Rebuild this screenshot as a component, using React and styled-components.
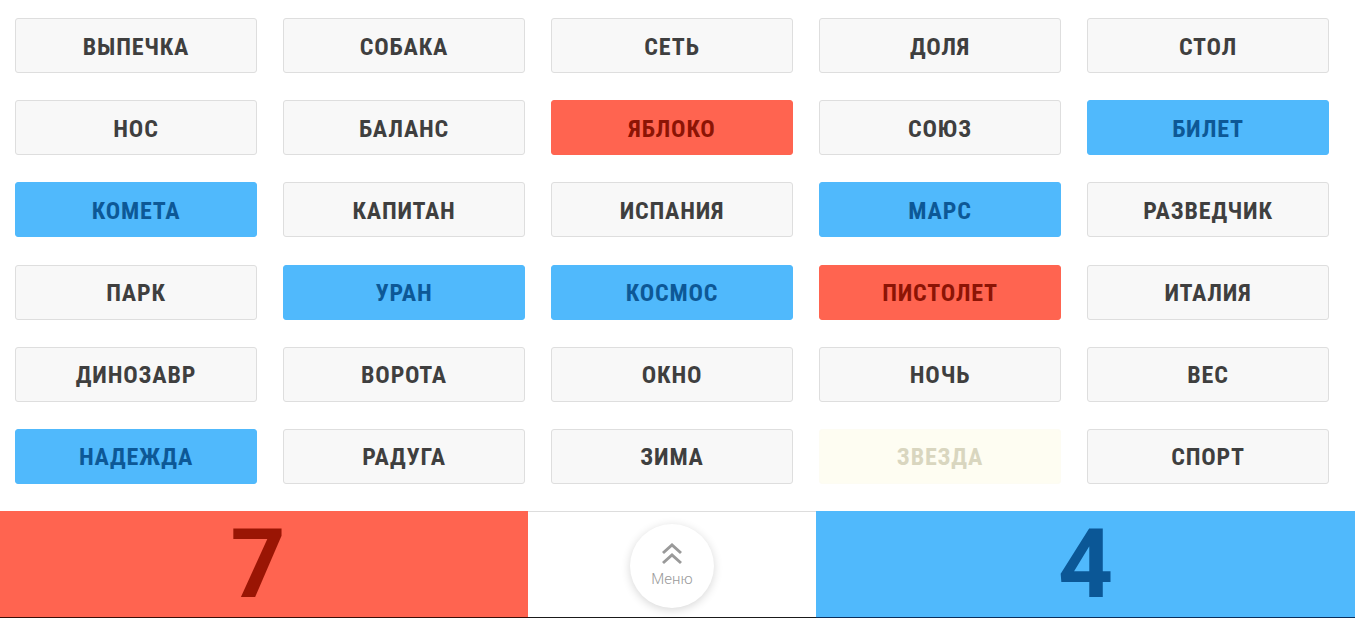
import React from "react";
import styled, { createGlobalStyle } from "styled-components";

const Global = createGlobalStyle`
  html, body { margin: 0; padding: 0; background: #fff; }
  body { font-family: Roboto, "Noto Sans", sans-serif; overflow: hidden; }
`;

const Page = styled.div`
  width: 1355px;
  height: 618px;
  display: flex;
  flex-direction: column;
  background: #fff;
`;

const Grid = styled.div`
  display: grid;
  grid-template-columns: repeat(5, 242px);
  grid-auto-rows: 55px;
  align-content: start;
  column-gap: 26px;
  row-gap: 27.2px;
  padding: 18px 26px 0 15px;
  height: 511px;
  box-sizing: border-box;
`;

const palette = {
  neutral: { bg: "#f8f8f8", border: "#dedede", color: "#3f3f3f" },
  red: { bg: "#ff6450", border: "#ff6450", color: "#8c1405" },
  blue: { bg: "#50b9fc", border: "#50b9fc", color: "#0d5896" },
  open: { bg: "#fefdf2", border: "#fdfcf3", color: "#d9d6bf" },
};

const Card = styled.div`
  display: flex;
  align-items: center;
  justify-content: center;
  border-radius: 3px;
  box-sizing: border-box;
  border: 1px solid ${(p) => palette[p.$kind].border};
  background: ${(p) => palette[p.$kind].bg};
  color: ${(p) => palette[p.$kind].color};
  font-family: "Roboto Condensed", Roboto, sans-serif;
  font-stretch: 87.5%;
  font-weight: 700;
  font-size: 24px;
  letter-spacing: 0.8px;
  text-transform: uppercase;
  padding-top: 2px;
`;

const Bar = styled.div`
  display: grid;
  grid-template-columns: 528px 288px 1fr;
  height: 107px;
`;

const Score = styled.div`
  display: flex;
  align-items: center;
  justify-content: center;
  background: ${(p) => (p.$team === "red" ? "#ff6450" : "#50b9fc")};
  color: ${(p) => (p.$team === "red" ? "#9a1504" : "#0b5796")};
  border-bottom: 1px solid ${(p) => (p.$team === "red" ? "#3a0f08" : "#0a2f5c")};
  font-family: Roboto, sans-serif;
  font-weight: 700;
  font-size: 96px;
  line-height: 1;
  padding-right: ${(p) => (p.$team === "red" ? "12px" : "0")};
  box-sizing: border-box;
`;

const Middle = styled.div`
  display: flex;
  align-items: center;
  justify-content: center;
  background: #fff;
  border-top: 1px solid #dddddd;
  border-bottom: 1px solid #1a1a1a;
  box-sizing: border-box;
`;

const MenuButton = styled.div`
  width: 84px;
  height: 84px;
  border-radius: 50%;
  background: #fff;
  box-shadow: 0 2px 10px rgba(0, 0, 0, 0.16);
  display: flex;
  flex-direction: column;
  align-items: center;
  justify-content: center;
  gap: 5px;
  margin-top: 2px;
`;

const MenuLabel = styled.span`
  font-family: Roboto, sans-serif;
  font-weight: 300;
  font-size: 15px;
  color: #9a9a9a;
`;

const words = [
  ["ВЫПЕЧКА", "neutral"], ["СОБАКА", "neutral"], ["СЕТЬ", "neutral"], ["ДОЛЯ", "neutral"], ["СТОЛ", "neutral"],
  ["НОС", "neutral"], ["БАЛАНС", "neutral"], ["ЯБЛОКО", "red"], ["СОЮЗ", "neutral"], ["БИЛЕТ", "blue"],
  ["КОМЕТА", "blue"], ["КАПИТАН", "neutral"], ["ИСПАНИЯ", "neutral"], ["МАРС", "blue"], ["РАЗВЕДЧИК", "neutral"],
  ["ПАРК", "neutral"], ["УРАН", "blue"], ["КОСМОС", "blue"], ["ПИСТОЛЕТ", "red"], ["ИТАЛИЯ", "neutral"],
  ["ДИНОЗАВР", "neutral"], ["ВОРОТА", "neutral"], ["ОКНО", "neutral"], ["НОЧЬ", "neutral"], ["ВЕС", "neutral"],
  ["НАДЕЖДА", "blue"], ["РАДУГА", "neutral"], ["ЗИМА", "neutral"], ["ЗВЕЗДА", "open"], ["СПОРТ", "neutral"],
];

const Chevrons = () => (
  <svg width="24" height="22" viewBox="0 0 24 22" fill="none" stroke="#9a9a9a" strokeWidth="3" strokeLinecap="butt" strokeLinejoin="miter">
    <polyline points="3,10 12,2 21,10" />
    <polyline points="3,20 12,12 21,20" />
  </svg>
);

export default function App() {
  return (
    <Page>
      <Global />
      <Grid>
        {words.map(([w, k]) => (
          <Card key={w} $kind={k}>{w}</Card>
        ))}
      </Grid>
      <Bar>
        <Score $team="red">7</Score>
        <Middle>
          <MenuButton>
            <Chevrons />
            <MenuLabel>Меню</MenuLabel>
          </MenuButton>
        </Middle>
        <Score $team="blue">4</Score>
      </Bar>
    </Page>
  );
}
